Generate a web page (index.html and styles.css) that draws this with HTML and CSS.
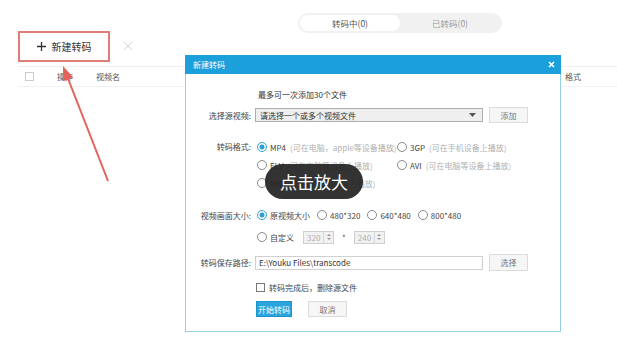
FILE: index.html
```html
<!DOCTYPE html>
<html lang="zh-CN">
<head>
<meta charset="utf-8">
<title>新建转码</title>
<link rel="stylesheet" href="styles.css">
</head>
<body>
<div class="app">
  <div class="header">
    <button class="new-btn">
      <svg class="plus" width="9" height="9" viewBox="0 0 9 9"><path d="M4.5 0V9M0 4.5H9" stroke="#333" stroke-width="1.3"/></svg>
      <span>新建转码</span>
    </button>
    <svg class="clear" width="10" height="10" viewBox="0 0 10 10"><path d="M1 1L9 9M9 1L1 9" stroke="#d4d4d4" stroke-width="1"/></svg>
    <div class="tabs">
      <div class="tab active">转码中(0)</div>
      <div class="tab">已转码(0)</div>
    </div>
  </div>
  <div class="thead">
    <span class="chk"></span>
    <span class="col-op">操作</span>
    <span class="col-name">视频名</span>
    <span class="spacer"></span>
    <span class="col-fmt">格式</span>
  </div>
</div>

<div class="dialog">
  <div class="dlg-title">
    <span>新建转码</span>
    <svg width="7" height="7" viewBox="0 0 7 7"><path d="M1 1L6 6M6 1L1 6" stroke="#fff" stroke-width="1.6"/></svg>
  </div>
  <div class="dlg-body">
    <div class="row r-hint">
      <span class="label"></span>
      <span class="hint">最多可一次添加30个文件</span>
    </div>
    <div class="row r-select">
      <span class="label">选择源视频:</span>
      <div class="select">
        <span>请选择一个或多个视频文件</span>
        <svg width="7" height="4" viewBox="0 0 7 4"><path d="M0 0H7L3.5 4Z" fill="#555"/></svg>
      </div>
      <button class="btn btn-side">添加</button>
    </div>
    <div class="row r-format">
      <span class="label">转码格式:</span>
      <div class="fmt-grid">
        <label class="opt"><span class="radio on"></span><span class="opt-name">MP4</span><span class="opt-hint">(可在电脑，apple等设备播放)</span></label>
        <label class="opt"><span class="radio"></span><span class="opt-name">3GP</span><span class="opt-hint">(可在手机设备上播放)</span></label>
        <label class="opt"><span class="radio"></span><span class="opt-name">FLV</span><span class="opt-hint">(可在电脑等设备上播放)</span></label>
        <label class="opt"><span class="radio"></span><span class="opt-name">AVI</span><span class="opt-hint">(可在电脑等设备上播放)</span></label>
        <label class="opt"><span class="radio"></span><span class="opt-name">MKV</span><span class="opt-hint">(可在电脑等设备上播放)</span></label>
      </div>
    </div>
    <div class="row r-size">
      <span class="label">视频画面大小:</span>
      <div class="size-opts">
        <label class="opt"><span class="radio on"></span><span class="opt-name">原视频大小</span></label>
        <label class="opt"><span class="radio"></span><span class="opt-name">480*320</span></label>
        <label class="opt"><span class="radio"></span><span class="opt-name">640*480</span></label>
        <label class="opt"><span class="radio"></span><span class="opt-name">800*480</span></label>
      </div>
    </div>
    <div class="row r-custom">
      <span class="label"></span>
      <div class="custom">
        <label class="opt"><span class="radio"></span><span class="opt-name">自定义</span></label>
        <div class="spin spin-first"><span class="val">320</span><span class="arrows"><i class="up"></i><i class="down"></i></span></div>
        <span class="times">*</span>
        <div class="spin"><span class="val">240</span><span class="arrows"><i class="up"></i><i class="down"></i></span></div>
      </div>
    </div>
    <div class="row r-path">
      <span class="label">转码保存路径:</span>
      <div class="input">E:\Youku Files\transcode</div>
      <button class="btn btn-side btn-tall">选择</button>
    </div>
    <div class="row r-check">
      <span class="label"></span>
      <label class="check"><span class="box"></span><span>转码完成后，删除源文件</span></label>
    </div>
    <div class="row r-actions">
      <span class="label"></span>
      <button class="btn btn-primary">开始转码</button>
      <button class="btn btn-cancel">取消</button>
    </div>
  </div>
</div>

<div class="zoom-hint">点击放大</div>

<svg class="arrow" width="617" height="361" viewBox="0 0 617 361">
  <line x1="108" y1="181" x2="67" y2="76" stroke="#e3625a" stroke-width="2"/>
  <polygon points="63,66 73.2,77.4 63.2,81.2" fill="#e3625a"/>
</svg>
</body>
</html>
```

FILE: styles.css
```css
* { box-sizing: border-box; }
html, body { margin: 0; padding: 0; }
body {
  width: 617px;
  height: 361px;
  background: #fff;
  font-family: "Noto Sans CJK SC", "Liberation Sans", sans-serif;
  color: #333;
  position: relative;
  overflow: hidden;
}

/* header */
.header {
  display: flex;
  align-items: flex-start;
  height: 62px;
}
.new-btn {
  margin: 31px 0 0 18px;
  width: 92px;
  height: 31px;
  border: 2px solid #e07d76;
  background: #fff;
  display: flex;
  align-items: center;
  justify-content: center;
  gap: 6px;
  font-family: inherit;
  font-size: 10px;
  color: #333;
  padding: 0;
}
.plus { display: block; }
.clear { margin: 41px 0 0 13px; display: block; }
.tabs {
  margin: 13px 0 0 165px;
  display: flex;
  padding: 2px;
  height: 20px;
  border-radius: 10px;
  background: #f1f1f1;
}
.tab {
  width: 100px;
  height: 16px;
  line-height: 16px;
  text-align: center;
  font-size: 8.5px;
  color: #999;
  border-radius: 8px;
}
.tab.active { background: #fff; color: #555; }

/* table head */
.thead {
  margin: 4px 0 0 18px;
  height: 21px;
  border-top: 1px solid #efefef;
  border-bottom: 1px solid #f2f2f2;
  display: flex;
  align-items: center;
  font-size: 8px;
  color: #555;
}
.chk {
  width: 9px;
  height: 9px;
  border: 1px solid #ccc;
  margin-left: 7px;
}
.col-op { margin-left: 23px; }
.col-name { margin-left: 23px; }
.spacer { flex: 1; }
.col-fmt { margin-right: 36px; }

/* dialog */
.dialog {
  position: absolute;
  left: 185px;
  top: 55px;
  width: 376px;
  height: 277px;
  background: #fff;
  border: 1px solid #93d0e3;
  border-top: none;
}
.dlg-title {
  height: 19px;
  margin: 0 -1px;
  background: #1ba0dc;
  color: #fff;
  font-size: 8px;
  display: flex;
  align-items: center;
  justify-content: space-between;
  padding: 0 6px 0 8px;
}
.dlg-title svg { display: block; }
.dlg-body { display: flex; flex-direction: column; font-size: 8px; }
.row { display: flex; align-items: center; }
.label {
  width: 65px;
  margin-right: 4px;
  text-align: right;
  color: #444;
  flex: none;
}
.r-hint { margin-top: 14px; height: 12px; }
.hint { margin-left: 3px; color: #333; }

.r-select { margin-top: 7px; height: 16px; }
.select {
  width: 228px;
  height: 14px;
  border: 1px solid #adadad;
  background: #efefef;
  display: flex;
  align-items: center;
  justify-content: space-between;
  padding: 0 6px 0 4px;
  color: #333;
}
.select svg { display: block; }
.btn {
  font-family: inherit;
  font-size: 8px;
  padding: 0;
  border: 1px solid #dcdcdc;
  background: #f6f6f6;
  color: #777;
}
.btn-side { margin-left: 6px; width: 39px; height: 16px; }
.btn-tall { height: 17px; }

.r-format { margin-top: 15px; align-items: flex-start; }
.r-format .label { line-height: 18px; }
.fmt-grid {
  display: grid;
  grid-template-columns: 140px auto;
  grid-auto-rows: 18px;
  align-items: center;
  padding-left: 2px;
}
.opt { display: flex; align-items: center; white-space: nowrap; }
.radio {
  width: 10px;
  height: 10px;
  border: 1px solid #8a8a8a;
  border-radius: 50%;
  margin-right: 3px;
  flex: none;
  background: #fff;
}
.radio.on {
  border-color: #2c9fd6;
  background: radial-gradient(circle, #2c9fd6 0 2.2px, #fff 2.8px);
}
.opt-name { color: #444; }
.opt-hint { color: #b0b0b0; margin-left: 4px; }

.r-size { margin-top: 14px; height: 18px; }
.size-opts { display: flex; gap: 7px; padding-left: 2px; }

.r-custom { margin-top: 4px; height: 18px; }
.custom { display: flex; align-items: center; padding-left: 2px; }
.spin {
  width: 31px;
  height: 13px;
  border: 1px solid #cfcfcf;
  background: #f1f1f1;
  display: flex;
  color: #b0b0b0;
}
.spin-first { margin-left: 9px; }
.spin .val { flex: 1; padding-left: 3px; line-height: 11px; }
.spin .arrows {
  width: 10px;
  border-left: 1px solid #d8d8d8;
  display: flex;
  flex-direction: column;
  align-items: center;
  justify-content: space-around;
  padding: 1px 0;
}
.spin i { display: block; width: 0; height: 0; border-left: 2px solid transparent; border-right: 2px solid transparent; }
.spin .up { border-bottom: 2px solid #999; }
.spin .down { border-top: 2px solid #999; }
.times { margin: 0 8px; color: #555; }

.r-path { margin-top: 8px; height: 17px; }
.input {
  width: 228px;
  height: 14px;
  border: 1px solid #d0d0d0;
  background: #fff;
  padding-left: 3px;
  line-height: 12px;
  color: #333;
}

.r-check { margin-top: 10px; height: 12px; }
.check { display: flex; align-items: center; margin-left: 1px; color: #444; }
.check .box { width: 9px; height: 9px; border: 1px solid #777; margin-right: 4px; background: #fff; }

.r-actions { margin-top: 8px; height: 16px; }
.btn-primary {
  margin-left: 1px;
  width: 36px;
  height: 16px;
  background: #2aa5de;
  border-color: #1d93cc;
  color: #fff;
}
.btn-cancel { margin-left: 16px; width: 39px; height: 16px; }

/* overlays */
.zoom-hint {
  position: absolute;
  left: 265px;
  top: 164px;
  width: 98px;
  height: 35px;
  border-radius: 18px;
  background: rgba(36, 36, 36, 0.93);
  color: #fff;
  font-size: 17px;
  display: flex;
  align-items: center;
  justify-content: center;
}
.arrow {
  position: absolute;
  left: 0;
  top: 0;
  pointer-events: none;
}
```
